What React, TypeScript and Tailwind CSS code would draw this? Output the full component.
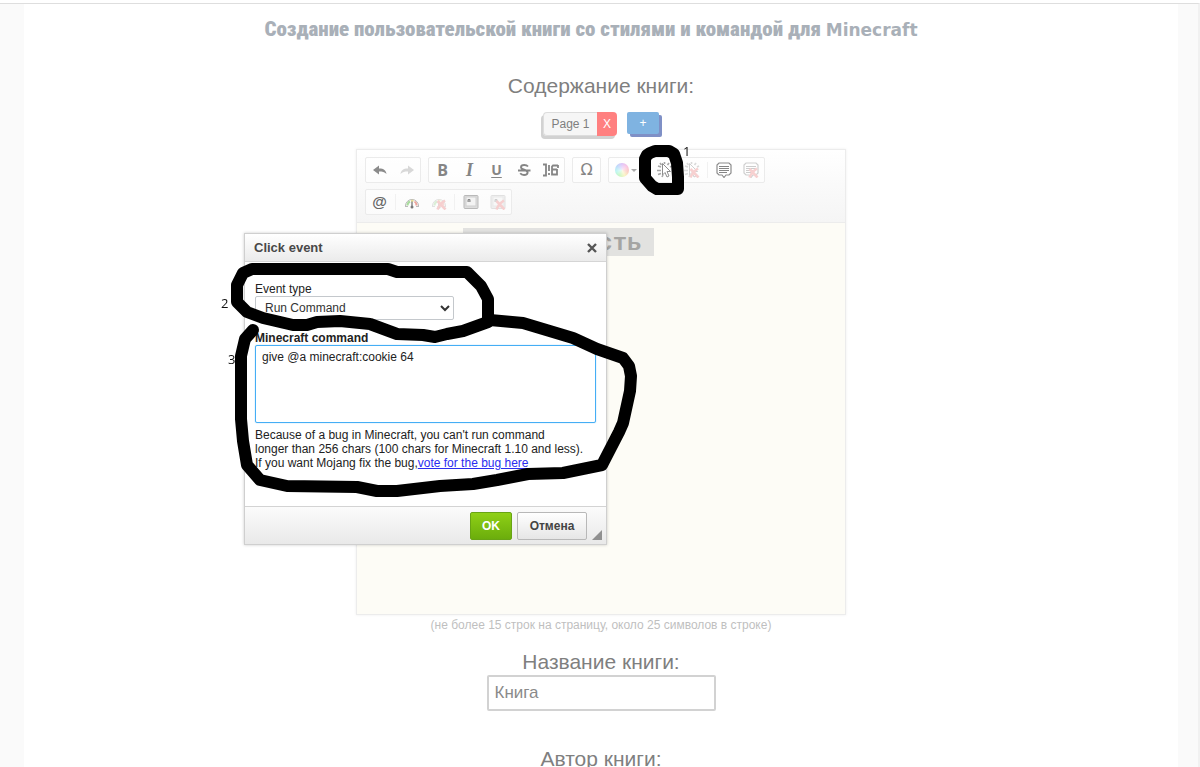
import React, { useState } from 'react';

const ToolGroup: React.FC<{ children: React.ReactNode }> = ({ children }) => (
  <div className="flex h-[26px] items-center rounded-xs border border-[#ebebeb] bg-white/60">{children}</div>
);

const ToolButton: React.FC<{ label: string; wide?: boolean; children: React.ReactNode }> = ({ label, wide, children }) => (
  <button type="button" aria-label={label} className={`flex h-6 items-center justify-center ${wide ? 'w-[37px]' : 'w-[27px]'}`}>
    {children}
  </button>
);

const Separator = () => <span className="mx-0.5 h-4 w-px bg-[#f1f1f1]" />;

const Icon: React.FC<{ children: React.ReactNode; faded?: boolean }> = ({ children, faded }) => (
  <svg viewBox="0 0 16 16" className={`size-4 ${faded ? 'opacity-40' : ''}`} fill="none" aria-hidden="true">
    {children}
  </svg>
);

const Cross = () => (
  <path d="M6.500 7l8 8.500M14 6.500c-3 2-6 5-7.500 9" stroke="#ee8e8e" strokeWidth="2.600" />
);

const Cursor = () => (
  <>
    <path d="M1 4l3 1M0 8.500h4M1 12.500l3-1M3 1l1.500 2M7.500 0v2M12 1l-1.500 2M5 15l1-2M13 5l2-1" stroke="#a5a5a5" strokeWidth="1.600" />
    <path d="M5.500 1.500v11.500l2.500-2.500 2 4.500 2-1-2-4.500h3.500z" fill="#fff" stroke="#8d8d8d" />
  </>
);

const Bubble = () => (
  <>
    <path d="M3 1h10l2 2v8l-2 2h-3l-2 2.500L6 13H3l-2-2V3z" fill="#fff" stroke="#8c8c8c" strokeWidth="1.200" />
    <path d="M3 4.500h10M3 6.500h10M3 8.500h10M3 10.500h8" stroke="#858585" />
  </>
);

const Gauge = () => (
  <>
    <path d="M1.500 12a6.500 6.500 0 1 1 13 0" stroke="#b5b5b5" />
    <path d="M3.500 11.500a4.500 4.500 0 0 1 2.500-4" stroke="#a9dc9e" strokeWidth="2" />
    <path d="M7 6.800h2.500" stroke="#e7df93" strokeWidth="2" />
    <path d="M10.500 7.500a4.500 4.500 0 0 1 2 4" stroke="#eda59c" strokeWidth="2" />
    <path d="M1 12.500h3M12 12.500h3" stroke="#bbb" />
    <path d="M8 7.500v5" stroke="#777" strokeWidth="1.300" />
    <circle cx="8" cy="13" r="1.500" fill="#777" />
  </>
);

const Keycap = () => (
  <>
    <rect x="1" y="1.500" width="14" height="13" rx="1" fill="#ddd" stroke="#b9b9b9" />
    <rect x="3" y="3" width="10" height="9" fill="#f3f3f3" stroke="#cfcfcf" />
    <path d="M5 8V5.500h2V8M5 7h2" stroke="#888" />
  </>
);

const Toolbar = () => (
  <div className="flex flex-wrap gap-x-[7px] gap-y-[6px] border-b border-[#ececec] bg-linear-to-b from-white to-[#f5f5f5] px-2 py-[7px] font-['DejaVu_Sans',sans-serif] text-[#858585]">
    <ToolGroup>
      <ToolButton label="Отменить">
        <Icon><path d="M1 8l6-4.500v3c5 0 7 2 7.500 5.500-2-2-4-2.500-7.500-2.500v3z" fill="#8b8b8b" /></Icon>
      </ToolButton>
      <ToolButton label="Повторить">
        <Icon faded><path d="M15 8L9 3.500v3c-5 0-7 2-7.500 5.500 2-2 4-2.500 7.500-2.500v3z" fill="#a0a0a0" /></Icon>
      </ToolButton>
    </ToolGroup>
    <ToolGroup>
      <ToolButton label="Полужирный"><b className="font-['Open_Sans',sans-serif] text-base leading-6">B</b></ToolButton>
      <ToolButton label="Курсив"><b className="font-['Liberation_Serif',serif] text-lg leading-6 italic">I</b></ToolButton>
      <ToolButton label="Подчеркнутый"><b className="font-['Open_Sans',sans-serif] text-sm leading-6 underline underline-offset-2">U</b></ToolButton>
      <ToolButton label="Зачеркнутый">
        <Icon>
          <path d="M12 4.500C11 3.300 9.800 3 8.300 3 6.500 3 5 3.700 5 5.200 5 8.300 11.600 7.200 11.600 10.500c0 1.600-1.600 2.500-3.600 2.500-1.700 0-3-.6-3.800-1.700M2 8.500h12.500" stroke="#858585" strokeWidth="1.900" />
        </Icon>
      </ToolButton>
      <ToolButton label="Случайные символы">
        <Icon>
          <path d="M0 2.500h3v11H0M6 3v6M6 11v2" stroke="#858585" strokeWidth="1.800" />
          <path d="M15 3.500h-5L9 4.500v3h5M9 7.500v5h5V7M15 3v3" stroke="#858585" strokeWidth="1.800" />
        </Icon>
      </ToolButton>
    </ToolGroup>
    <ToolGroup>
      <ToolButton label="Символ"><span className="text-base leading-6">Ω</span></ToolButton>
    </ToolGroup>
    <ToolGroup>
      <ToolButton label="Цвет текста" wide>
        <span className="size-[14px] rounded-full bg-[radial-gradient(circle,#ffffffcc,#ffffff33),conic-gradient(#c79cf5,#f79ad0,#f9a99a,#f7ee9b,#a2f29b,#8df0e8,#8ec0f8,#c79cf5)]" />
        <span className="mr-1 ml-0.5 border-x-[3px] border-t-[3px] border-x-transparent border-t-[#aaa]" />
      </ToolButton>
      <Separator />
      <ToolButton label="Событие клика"><Icon><Cursor /></Icon></ToolButton>
      <ToolButton label="Удалить событие клика"><Icon faded><Cursor /><Cross /></Icon></ToolButton>
      <Separator />
      <ToolButton label="Подсказка"><Icon><Bubble /></Icon></ToolButton>
      <ToolButton label="Удалить подсказку"><Icon faded><Bubble /><Cross /></Icon></ToolButton>
    </ToolGroup>
    <ToolGroup>
      <ToolButton label="Селектор"><b className="font-['Liberation_Sans',sans-serif] text-[15px] leading-5 text-[#666]">@</b></ToolButton>
      <Separator />
      <ToolButton label="Счет"><Icon><Gauge /></Icon></ToolButton>
      <ToolButton label="Удалить счет"><Icon faded><Gauge /><Cross /></Icon></ToolButton>
      <Separator />
      <ToolButton label="Клавиша"><Icon><Keycap /></Icon></ToolButton>
      <ToolButton label="Удалить клавишу"><Icon faded><Keycap /><Cross /></Icon></ToolButton>
    </ToolGroup>
  </div>
);

const ClickEventDialog = () => {
  const [eventType, setEventType] = useState('run');
  const [command, setCommand] = useState('give @a minecraft:cookie 64');

  return (
    <div role="dialog" aria-labelledby="dialog-title" className="absolute top-[83px] -left-[113px] w-[363px] border border-[#cfcfcf] bg-white text-xs text-[#222] shadow-[0_0_3px_#0003]">
      <div className="flex h-7 items-center justify-between border-b border-[#d5d5d5] bg-linear-to-b from-white to-[#ebebeb] pr-2 pl-[9px]">
        <h2 id="dialog-title" className="text-[13px] font-bold text-[#484848]">Click event</h2>
        <button type="button" aria-label="Закрыть">
          <svg viewBox="0 0 12 12" className="size-3" aria-hidden="true">
            <path d="M2 2l8 8M10 2l-8 8" stroke="#555" strokeWidth="2.400" />
          </svg>
        </button>
      </div>

      <div className="flex h-[244px] flex-col items-start px-[10px] pt-5">
        <label htmlFor="event-type" className="leading-[14px]">Event type</label>
        <select
          id="event-type"
          value={eventType}
          onChange={(e) => setEventType(e.target.value)}
          className="h-6 w-[199px] rounded-xs border border-[#c4c8cc] bg-white px-[5px] text-[#333]"
        >
          <option value="run">Run Command</option>
          <option value="suggest">Suggest Command</option>
          <option value="url">Open URL</option>
        </select>
        <label htmlFor="command" className="mt-[11px] leading-[14px] font-bold">Minecraft command</label>
        <textarea
          id="command"
          autoFocus
          value={command}
          onFocus={(e) => e.target.setSelectionRange(command.length, command.length)}
          onChange={(e) => setCommand(e.target.value)}
          className="h-[78px] w-full resize-none rounded-xs border border-solid border-[#45aef5] px-[6px] py-1 leading-[14px] text-[#222] shadow-[0_0_1px_#45aef5] outline-none"
        />
        <p className="mt-[5px] leading-[14px]">
          Because of a bug in Minecraft, you can't run command<br />
          longer than 256 chars (100 chars for Minecraft 1.10 and less).<br />
          If you want Mojang fix the bug,<a href="#bug" className="text-[#2b2bef] underline">vote for the bug here</a>
        </p>
      </div>

      <div className="flex h-[38px] items-center justify-end border-t border-[#d3d3d3] bg-linear-to-b from-[#fbfbfb] to-[#e9e9e9] pr-1 font-bold">
        <button type="button" className="mr-[5px] h-7 w-[42px] rounded-xs border border-[#68a414] bg-linear-to-b from-[#8fd016] to-[#6bad0c] text-white">OK</button>
        <button type="button" className="mr-[5px] h-7 w-[70px] rounded-xs border border-[#b8b8b8] bg-linear-to-b from-white to-[#e6e6e6] text-[#444]">Отмена</button>
        <svg viewBox="0 0 10 10" className="mb-1 size-[10px] self-end" aria-hidden="true"><path d="M10 0v10H0z" fill="#909090" /></svg>
      </div>
    </div>
  );
};

// Hand-drawn marker outlines with the step numbers
const StepMarks = () => (
  <svg viewBox="206 139 500 370" className="pointer-events-none absolute -top-[11px] -left-[151px] h-[370px] w-[500px] max-w-none" aria-hidden="true">
    <g fill="none" stroke="#000" strokeWidth="12" strokeLinejoin="round" strokeLinecap="round">
      <path d="M650 153l5-2h14l5 3 3 9 1 14v12h-21l-5-3-7-8v-19l2-4z" />
      <path d="M252 269h136l9 3h70l14 14 7 13v23l-25 9-16 3-12 3-12-2-26-1-27-10-30-3-23 1-10 3h-14l-30-7-16-6-10-10v-17l6-12z" />
      <path d="M490 320l33 3 20 6 30 9 24 11 26 9 6 8 2 10-1 15-7 32-4 9-17 33-39 8-35 1-31 6-24 4-33 2-43 5h-20l-20-4-70-1-27-6-13-15-4-24-2-22v-63l4-17 8-9" />
    </g>
    <g fill="#111" className="font-['Open_Sans',sans-serif] text-[13px]">
      <text x="683" y="156">1</text>
      <text x="221" y="308">2</text>
      <text x="228" y="364">3</text>
    </g>
  </svg>
);

export default function App() {
  const [bookName, setBookName] = useState('Книга');

  return (
    <div className="h-screen overflow-hidden bg-white pt-[3px] font-['Liberation_Sans',Arial,sans-serif]">
      <div className="h-full border-t border-r-2 border-[#dedede] border-r-[#f1f1f1] bg-[#fafafa] pr-5 pl-6">
        <main className="flex h-full flex-col items-center bg-white text-[#7f7f7f]">
          <h1 className="mt-[11px] pr-5 font-[Impact,'Roboto_Condensed',Roboto,sans-serif] text-[21px] leading-7 font-black whitespace-nowrap text-[#a9b0b8]">
            Создание пользовательской книги со стилями и командой для <span className="font-['DejaVu_Sans',sans-serif] text-[17px] leading-none">Minecraft</span>
          </h1>

          <h2 className="mt-[29px] text-[21px] leading-7">Содержание книги:</h2>

          <div className="mt-3 flex gap-[10px] text-xs">
            <div className="flex h-6 rounded-sm bg-[#f6f6f6] shadow-[-2px_3px_0_#d2d2d2]">
              <button type="button" className="w-[54px] rounded-l-sm border border-r-0 border-[#ddd]">Page 1</button>
              <button type="button" className="w-5 rounded-r-sm bg-[#ff8080] text-white">X</button>
            </div>
            <button type="button" aria-label="Добавить страницу" className="h-[22px] w-8 rounded-xs bg-[#7fb3e1] text-white shadow-[3px_3px_0_#7f90c6]">+</button>
          </div>

          <div className="relative mt-[13px] w-[490px] border border-[#ececec] shadow-[0_0_3px_#0001]">
            <Toolbar />
            <div className="flex h-[391px] justify-center bg-[#fdfcf6] pt-[5px] pr-[86px]">
              <div className="flex h-7 w-[191px] items-center justify-end bg-[#e2e2e0] pt-1 pr-3 font-['Liberation_Mono',monospace] text-2xl font-bold text-[#a5a5a3]">
                сть
              </div>
            </div>
            <ClickEventDialog />
            <StepMarks />
          </div>
          <p className="mt-[2px] text-xs leading-4 text-[#bfbfbf]">(не более 15 строк на страницу, около 25 символов в строке)</p>

          <label htmlFor="book-name" className="mt-[15px] text-[21px] leading-[27px]">Название книги:</label>
          <input
            id="book-name"
            value={bookName}
            onChange={(e) => setBookName(e.target.value)}
            className="h-9 w-[229px] shrink-0 rounded-xs border-2 border-[#d2d2d2] bg-white px-[6px] text-[17px] text-[#8a8a8a] outline-none"
          />

          <h2 className="mt-[34px] text-[21px] leading-7">Автор книги:</h2>
        </main>
      </div>
    </div>
  );
}
